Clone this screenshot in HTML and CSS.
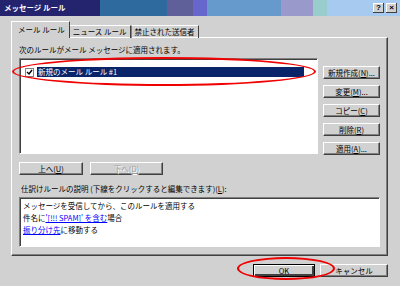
FILE: index.html
```html
<!DOCTYPE html>
<html lang="ja">
<head>
    <meta charset="UTF-8">
    <title>メッセージ ルール</title>
    <link rel="stylesheet" href="styles.css">
</head>
<body>
    <div class="dialog">
        <div class="titlebar">
            <span class="title">メッセージ ルール</span>
            <div class="caption-btns">
                <span class="cap-btn">?</span>
                <span class="cap-btn">×</span>
            </div>
        </div>

        <div class="tabs">
            <span class="tab tab-active">メール ルール</span>
            <span class="tab">ニュース ルール</span>
            <span class="tab">禁止された送信者</span>
        </div>

        <div class="panel">
            <p class="caption">次のルールがメール メッセージに適用されます。</p>

            <div class="rules-row">
                <div class="listbox">
                    <div class="rule-item">
                        <span class="check">
                            <svg width="7" height="7" viewBox="0 0 7 7"><path d="M1 3 L3 5 L6 1" fill="none" stroke="#000" stroke-width="1.4"/></svg>
                        </span>
                        <span class="rule-name">新規のメール ルール #1</span>
                    </div>
                </div>
                <div class="side-btns">
                    <button class="btn">新規作成(<u>N</u>)...</button>
                    <button class="btn">変更(<u>M</u>)...</button>
                    <button class="btn">コピー(<u>C</u>)</button>
                    <button class="btn">削除(<u>R</u>)</button>
                    <button class="btn">適用(<u>A</u>)...</button>
                </div>
            </div>

            <div class="move-btns">
                <button class="btn btn-up">上へ(<u>U</u>)</button>
                <button class="btn btn-down" disabled>下へ(<u>D</u>)</button>
            </div>

            <p class="caption caption-desc">仕訳けルールの説明 (下線をクリックすると編集できます)(<u>L</u>):</p>

            <div class="desc">
                <div>メッセージを受信してから、このルールを適用する</div>
                <div>件名に<a href="#">'[!!! SPAM]' を含む</a>場合</div>
                <div><a href="#">振り分け先</a>に移動する</div>
            </div>
        </div>

        <div class="footer">
            <button class="btn btn-ok">OK</button>
            <button class="btn btn-cancel">キャンセル</button>
        </div>

        <!-- red marks drawn over the screenshot -->
        <div class="mark mark-rule"></div>
        <div class="mark mark-ok"></div>
    </div>
</body>
</html>
```

FILE: styles.css
```css
/* base */
body {
    margin: 0;
    font-family: "Noto Sans CJK JP", "Liberation Sans", sans-serif;
    font-size: 7.5px;
    line-height: 12px;
    color: #000;
}

.dialog {
    position: relative;
    width: 400px;
    height: 286px;
    background: #d1d1d1;
    overflow: hidden;
}

/* title bar */
.titlebar {
    height: 16px;
    display: flex;
    align-items: center;
    justify-content: space-between;
    padding: 0 3px 0 4px;
    background: linear-gradient(to right,
        #23236e 0, #23236e 100px,
        #2f6a9f 100px, #2f6a9f 167px,
        #5f5f99 167px, #5f5f99 193px,
        #6666cc 193px, #6666cc 207px,
        #6699cc 207px, #6699cc 281px,
        #9999cc 281px, #9999cc 313px,
        #99cccc 313px, #99cccc 327px,
        #a6caf0 327px);
}

.title {
    color: #fff;
    font-weight: bold;
    font-size: 7.5px;
    white-space: nowrap;
}

.caption-btns {
    display: flex;
    gap: 2px;
}

.cap-btn {
    width: 11px;
    height: 10px;
    line-height: 10px;
    text-align: center;
    font-weight: bold;
    font-size: 8px;
    font-family: "Liberation Sans", sans-serif;
    background: #d1d1d1;
    box-shadow: inset -1px -1px #404040, inset 1px 1px #fff;
}

/* tabs */
.tabs {
    display: flex;
    align-items: flex-end;
    margin: 6px 0 -1px 11px;
    height: 16px;
}

.tab {
    height: 13px;
    line-height: 12px;
    padding: 0 3px;
    border: 1px solid;
    border-color: #fff #404040 transparent #fff;
    border-bottom: none;
    box-sizing: border-box;
    white-space: nowrap;
}

.tab-active {
    position: relative;
    height: 17px;
    line-height: 15px;
    padding: 0 4px 0 6px;
    background: #d1d1d1;
    z-index: 1;
}

.tab:nth-child(2) {
    border-left: none;
}

.tab:nth-child(3) {
    border-left: 1px solid #808080;
}

/* tab panel */
.panel {
    margin: 0 12px 0 11px;
    padding: 0 7px 8px 7px;
    border: 1px solid;
    border-color: #fff #404040 #404040 #fff;
    box-shadow: inset -1px -1px #808080;
}

.caption {
    margin: 6px 0 0 0;
    height: 12px;
    white-space: nowrap;
}

.caption-desc {
    margin-top: 8px;
    padding-left: 2px;
}

.rules-row {
    display: flex;
    margin-top: 2px;
}

.listbox {
    width: 299px;
    height: 96px;
    box-sizing: border-box;
    background: #fff;
    border: 1px solid;
    border-color: #808080 #fff #fff #808080;
    box-shadow: inset 1px 1px #404040;
    padding: 8px 13px 0 5px;
}

.rule-item {
    display: flex;
    align-items: center;
    height: 10px;
}

.check {
    width: 7px;
    height: 7px;
    border: 1px solid #808080;
    background: #fff;
    display: flex;
    margin-right: 3px;
}

.rule-name {
    flex: 1;
    height: 10px;
    line-height: 10px;
    background: #0a246a;
    color: #fff;
    padding-left: 1px;
    white-space: nowrap;
}

.side-btns {
    display: flex;
    flex-direction: column;
    gap: 6px;
    margin: 8px 0 0 5px;
    width: 57px;
}

/* buttons */
.btn {
    height: 13px;
    padding: 0;
    font-family: inherit;
    font-size: 7.5px;
    line-height: 11px;
    color: #000;
    background: #d1d1d1;
    border: 1px solid;
    border-color: #fff #404040 #404040 #fff;
    box-shadow: inset -1px -1px #808080;
    white-space: nowrap;
}

.btn[disabled] {
    color: #a0a0a0;
    text-shadow: 1px 1px #fff;
}

.move-btns {
    display: flex;
    gap: 7px;
    margin-top: 7px;
}

.btn-up {
    width: 64px;
}

.btn-down {
    width: 73px;
}

.desc {
    margin-top: 2px;
    height: 50px;
    box-sizing: border-box;
    background: #fff;
    border: 1px solid;
    border-color: #808080 #fff #fff #808080;
    box-shadow: inset 1px 1px #404040;
    padding: 2px 3px;
}

.desc a {
    color: #0000ff;
}

/* footer */
.footer {
    display: flex;
    justify-content: flex-end;
    gap: 5px;
    margin-top: 8px;
    padding-right: 12px;
}

.btn-ok {
    width: 62px;
    border-color: #000;
    box-shadow: inset 1px 1px #fff, inset -2px -2px #404040;
}

.btn-cancel {
    width: 68px;
}

/* red ellipses on top */
.mark {
    position: absolute;
    border: 2px solid #f00000;
    border-radius: 50%;
    box-sizing: border-box;
}

.mark-rule {
    left: 12px;
    top: 57px;
    width: 304px;
    height: 29px;
}

.mark-ok {
    left: 237px;
    top: 257px;
    width: 98px;
    height: 23px;
}
```
